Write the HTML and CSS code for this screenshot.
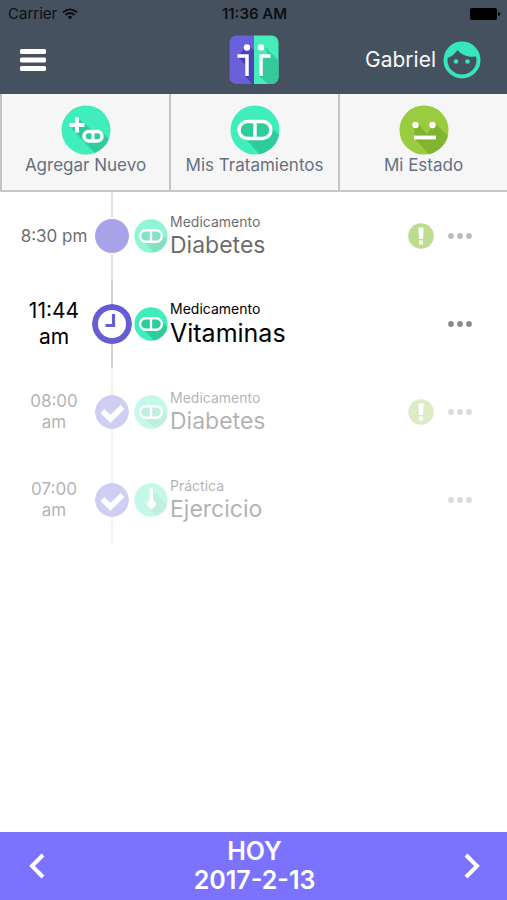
FILE: index.html
```html
<!DOCTYPE html>
<html lang="es">
<head>
    <meta charset="UTF-8">
    <meta name="viewport" content="width=device-width, initial-scale=1.0">
    <title>Tratamientos</title>
    <link rel="stylesheet" href="styles.css">
</head>
<body>
    <!-- Shared icons -->
    <svg class="sprite" aria-hidden="true">
        <clipPath id="disc"><circle cx="25" cy="25" r="24.5"/></clipPath>
        <symbol id="pill" viewBox="0 0 50 50">
            <circle cx="25" cy="25" r="24.5" fill="#40eebb"/>
            <path clip-path="url(#disc)" fill="#2fcc9b" d="M12 30 L38 19 L60 41 L50 60 L30 50 Z"/>
            <rect x="9" y="16.5" width="32" height="17" rx="8.5" fill="#2fcc9b" stroke="#fff" stroke-width="3.4"/>
            <path d="M25 17V33" stroke="#fff" stroke-width="3.4"/>
        </symbol>
        <symbol id="practice" viewBox="0 0 50 50">
            <circle cx="25" cy="25" r="24.5" fill="#40eebb"/>
            <path clip-path="url(#disc)" fill="#2fcc9b" d="M27 10L60 43L45 60L20 36Z"/>
            <path fill="#fff" d="M23 10a2.500 2.500 0 0 1 5 0V24L33 31L28 37.500Q25.500 39.500 23 37.500L18 31L23 24Z"/>
        </symbol>
        <symbol id="check" viewBox="0 0 34 34">
            <circle cx="17" cy="17" r="17" fill="#6a60d8"/>
            <path d="M7.500 16L15.500 24L27.500 12" fill="none" stroke="#fff" stroke-width="5.500"/>
        </symbol>
        <symbol id="alert" viewBox="0 0 26 26">
            <circle cx="13" cy="13" r="12.800" fill="#8fc63d"/>
            <path fill="#fff" d="M10.300 4.500H15.700L15 16H11ZM11 17.500H15V21.500H11Z"/>
        </symbol>
        <symbol id="dots" viewBox="0 0 24 6">
            <circle cx="3" cy="3" r="2.900"/><circle cx="12" cy="3" r="2.900"/><circle cx="21" cy="3" r="2.900"/>
        </symbol>
    </svg>

    <div class="app">
        <header class="header">
            <div class="status-bar">
                <div class="carrier">
                    <span>Carrier</span>
                    <svg width="16" height="12" viewBox="0 0 16 12" fill="none" stroke="#0b0f14" stroke-width="1.800">
                        <path d="M1 4.500Q8-1.800 15 4.500M3.500 7Q8 3 12.500 7"/>
                        <path d="M5.500 8.800Q8 6.800 10.500 8.800L8 11.500Z" fill="#0b0f14" stroke="none"/>
                    </svg>
                </div>
                <div class="clock">11:36 AM</div>
                <svg class="battery" width="31" height="12" viewBox="0 0 31 12">
                    <rect width="27" height="12" rx="2"/>
                    <path d="M28 4Q30.500 4.500 30.500 6T28 8Z"/>
                </svg>
            </div>
            <div class="nav-bar">
                <button class="menu" aria-label="Menú">
                    <svg width="26" height="22" viewBox="0 0 26 22" fill="#fff">
                        <rect width="26" height="5" rx="1.500"/><rect y="8.500" width="26" height="5" rx="1.500"/><rect y="17" width="26" height="5" rx="1.500"/>
                    </svg>
                </button>
                <svg class="logo" width="50" height="50" viewBox="0 0 50 50">
                    <clipPath id="logo-box"><rect x=".5" y=".5" width="49" height="48.500" rx="7"/></clipPath>
                    <g clip-path="url(#logo-box)">
                        <path fill="#6a60dc" d="M0 0H25V50H0Z"/>
                        <path fill="#45edba" d="M25 0H50V50H25Z"/>
                        <path fill="#4b41b8" d="M9 22L18 9L25 15V50H24L16 41V30Z"/>
                        <path fill="#36c99b" d="M35 11L50 26V50H40L30 41V24L40 22Z"/>
                    </g>
                    <circle cx="18" cy="12.500" r="3.200" fill="#fff"/>
                    <circle cx="32" cy="12.500" r="3.200" fill="#fff"/>
                    <path d="M8.500 21H18V41M41.500 21H32V41" fill="none" stroke="#fff" stroke-width="3.500"/>
                </svg>
                <a class="profile" href="#perfil">
                    <span>Gabriel</span>
                    <svg width="38" height="38" viewBox="0 0 38 38">
                        <circle cx="19" cy="19" r="16.500" fill="none" stroke="#36e6bd" stroke-width="4"/>
                        <path fill="#36e6bd" d="M2 17C7 17 11 14 14.500 9C19 15 27 17 36 15C34 6 27 1 19 1S3 7 2 17Z"/>
                        <circle cx="13" cy="20.500" r="2.300" fill="#36e6bd"/>
                        <circle cx="24.500" cy="20.500" r="2.300" fill="#36e6bd"/>
                    </svg>
                </a>
            </div>
        </header>

        <nav class="tabs">
            <button class="tab">
                <svg width="50" height="50" viewBox="0 0 50 50">
                    <circle cx="25" cy="25" r="24.500" fill="#40eebb"/>
                    <path clip-path="url(#disc)" fill="#2fcc9b" d="M17 13L33 27L42 28L60 46L45 60L11 24Z"/>
                    <path d="M16 12.500V27.500M8.500 20H23.500" stroke="#fff" stroke-width="4"/>
                    <rect x="23" y="26.500" width="18" height="9.500" rx="4.700" fill="#2fcc9b" stroke="#fff" stroke-width="3.400"/>
                    <path d="M32 27V36" stroke="#fff" stroke-width="3"/>
                </svg>
                <span>Agregar Nuevo</span>
            </button>
            <button class="tab">
                <svg width="50" height="50"><use href="#pill"/></svg>
                <span>Mis Tratamientos</span>
            </button>
            <button class="tab">
                <svg width="50" height="50" viewBox="0 0 50 50">
                    <circle cx="25" cy="25" r="24.500" fill="#9bcb3f"/>
                    <path clip-path="url(#disc)" fill="#82b52f" d="M15 22L19 18L28 29L33 22L36 18L55 37L40 60L16 34Z"/>
                    <circle cx="16.500" cy="20" r="3.200" fill="#fff"/>
                    <circle cx="33.500" cy="20" r="3.200" fill="#fff"/>
                    <path d="M15 32.500H37" stroke="#fff" stroke-width="3.800"/>
                </svg>
                <span>Mi Estado</span>
            </button>
        </nav>

        <main class="content">
            <ol class="timeline">
                <li class="event event-next">
                    <time class="time">8:30 pm</time>
                    <div class="marker"><span class="dot"></span></div>
                    <svg class="type" width="34" height="34"><use href="#pill"/></svg>
                    <div class="info">
                        <div class="kind">Medicamento</div>
                        <div class="name">Diabetes</div>
                    </div>
                    <svg class="alert" width="26" height="26"><use href="#alert"/></svg>
                    <button class="more" aria-label="Más opciones"><svg width="24" height="6"><use href="#dots"/></svg></button>
                </li>
                <li class="event event-current">
                    <time class="time">11:44 am</time>
                    <div class="marker">
                        <svg width="40" height="40" viewBox="0 0 40 40" fill="none" stroke="#665cd6">
                            <circle cx="20" cy="20" r="17" stroke-width="6"/>
                            <path d="M21.500 10V21.500H13.500" stroke-width="3.200"/>
                        </svg>
                    </div>
                    <svg class="type" width="34" height="34"><use href="#pill"/></svg>
                    <div class="info">
                        <div class="kind">Medicamento</div>
                        <div class="name">Vitaminas</div>
                    </div>
                    <button class="more" aria-label="Más opciones"><svg width="24" height="6"><use href="#dots"/></svg></button>
                </li>
                <li class="event event-done">
                    <time class="time">08:00 am</time>
                    <div class="marker"><svg width="34" height="34"><use href="#check"/></svg></div>
                    <svg class="type" width="34" height="34"><use href="#pill"/></svg>
                    <div class="info">
                        <div class="kind">Medicamento</div>
                        <div class="name">Diabetes</div>
                    </div>
                    <svg class="alert" width="26" height="26"><use href="#alert"/></svg>
                    <button class="more" aria-label="Más opciones"><svg width="24" height="6"><use href="#dots"/></svg></button>
                </li>
                <li class="event event-done">
                    <time class="time">07:00 am</time>
                    <div class="marker"><svg width="34" height="34"><use href="#check"/></svg></div>
                    <svg class="type" width="34" height="34"><use href="#practice"/></svg>
                    <div class="info">
                        <div class="kind">Práctica</div>
                        <div class="name">Ejercicio</div>
                    </div>
                    <button class="more" aria-label="Más opciones"><svg width="24" height="6"><use href="#dots"/></svg></button>
                </li>
            </ol>
        </main>

        <footer class="day-bar">
            <button class="arrow" aria-label="Día anterior">
                <svg width="16" height="26" viewBox="0 0 16 26"><path d="M14 2L3 13L14 24"/></svg>
            </button>
            <div class="day">
                <div>HOY</div>
                <div>2017-2-13</div>
            </div>
            <button class="arrow" aria-label="Día siguiente">
                <svg width="16" height="26" viewBox="0 0 16 26"><path d="M2 2L13 13L2 24"/></svg>
            </button>
        </footer>
    </div>
</body>
</html>
```
FILE: styles.css
```css
/* General Styles */
* {
    box-sizing: border-box;
}

body {
    margin: 0;
    background-color: #fff;
    color: #000;
    font-family: Inter, "Liberation Sans", sans-serif;
}

button {
    display: flex;
    align-items: center;
    justify-content: center;
    margin: 0;
    padding: 0;
    border: 0;
    background: none;
    color: inherit;
    font: inherit;
    cursor: pointer;
}

svg {
    display: block;
    flex: none;
}

.sprite {
    position: absolute;
    width: 0;
    height: 0;
}

.app {
    display: flex;
    flex-direction: column;
    min-height: 100vh;
}

/* Header */
.header {
    background-color: #46515f;
}

.status-bar {
    display: grid;
    grid-template-columns: 1fr auto 1fr;
    align-items: center;
    height: 27px;
    padding: 0 6px 0 8px;
    color: #0b0f14;
    font-size: 15px;
}

.carrier {
    display: flex;
    align-items: center;
    gap: 5px;
}

.clock {
    font-weight: 600;
}

.battery {
    justify-self: end;
}

.nav-bar {
    display: grid;
    grid-template-columns: 1fr auto 1fr;
    align-items: center;
    height: 67px;
    padding: 0 20px 2px;
}

.menu {
    justify-self: start;
}

.profile {
    display: flex;
    align-items: center;
    justify-self: end;
    gap: 7px;
    padding-right: 6px;
    color: #f6f8fa;
    font-size: 21px;
    text-decoration: none;
}

/* Tabs */
.tabs {
    display: flex;
    border-bottom: 2px solid #c8c8c8;
    background-color: #f6f6f7;
}

.tab {
    flex: 1;
    flex-direction: column;
    height: 96px;
    padding-bottom: 4px;
    border-left: 2px solid #c4c4c6;
    color: #657080;
    font-size: 17px;
    line-height: 20px;
}

/* Timeline */
.content {
    flex: 1;
}

.timeline {
    margin: 0;
    padding: 0;
    list-style: none;
}

.event {
    display: flex;
    align-items: center;
    height: 88px;
    padding: 0 35px 0 16px;
}

.time {
    width: 76px;
    padding: 0 4px;
    font-size: 17px;
    line-height: 21px;
    text-align: center;
}

.marker {
    display: flex;
    align-items: center;
    justify-content: center;
    align-self: stretch;
    width: 40px;
    margin-right: 2px;
    background: linear-gradient(#d0d0d0, #d0d0d0) center / 2px 100% no-repeat;
}

.dot {
    width: 34px;
    height: 34px;
}

.marker > * {
    border-radius: 50%;
    background-color: #fff;
}

.marker > .dot {
    background-color: #6a60d8;
    box-shadow: 0 0 0 2px #fff;
}

.info {
    flex: 1;
    padding-left: 2px;
}

.kind {
    font-size: 14px;
    line-height: 18px;
}

.name {
    font-size: 23px;
    line-height: 28px;
}

.alert {
    margin-right: 14px;
}

.more {
    height: 40px;
    fill: #8a8a8a;
}

.event-next {
    opacity: .58;
}

.event-done {
    opacity: .3;
}

.event-current .time {
    font-size: 21px;
    line-height: 26px;
}

.event-current .name {
    font-size: 25px;
    line-height: 30px;
}

/* Day selector */
.day-bar {
    display: flex;
    align-items: center;
    justify-content: space-between;
    height: 68px;
    padding: 0 27px 0 29px;
    background-color: #7b73ff;
    color: #fff;
}

.day {
    font-size: 25px;
    font-weight: 600;
    line-height: 29px;
    text-align: center;
}

.arrow svg {
    fill: none;
    stroke: #fff;
    stroke-width: 4;
}
```
